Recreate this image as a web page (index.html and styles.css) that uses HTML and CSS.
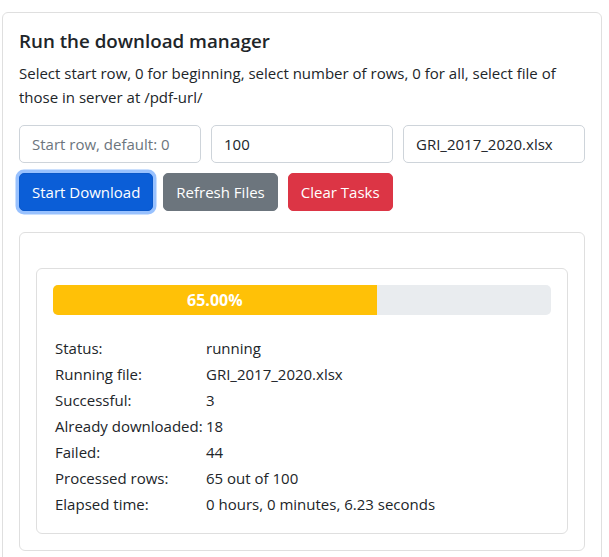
FILE: index.html
```html
<!DOCTYPE html>
<html lang="en">
<head>
<meta charset="utf-8">
<title>Download manager</title>
<link rel="stylesheet" href="styles.css">
</head>
<body>
<div class="card">
  <div class="card-body">
    <h5 class="card-title">Run the download manager</h5>
    <p class="card-text">Select start row, 0 for beginning, select number of rows, 0 for all, select file of those in server at /pdf-url/</p>
    <div class="inputs">
      <input class="form-control" type="text" placeholder="Start row, default: 0">
      <input class="form-control" type="text" value="100">
      <input class="form-control" type="text" value="GRI_2017_2020.xlsx">
    </div>
    <div class="buttons">
      <button class="btn btn-primary focused">Start Download</button>
      <button class="btn btn-secondary">Refresh Files</button>
      <button class="btn btn-danger">Clear Tasks</button>
    </div>
    <div class="card tasks">
      <div class="card-body tasks-body">
        <div class="card task">
          <div class="card-body">
            <div class="progress">
              <div class="progress-bar" style="width: 65%">65.00%</div>
            </div>
            <table class="stats">
              <tr><td>Status:</td><td>running</td></tr>
              <tr><td>Running file:</td><td>GRI_2017_2020.xlsx</td></tr>
              <tr><td>Successful:</td><td>3</td></tr>
              <tr><td>Already downloaded:</td><td>18</td></tr>
              <tr><td>Failed:</td><td>44</td></tr>
              <tr><td>Processed rows:</td><td>65 out of 100</td></tr>
              <tr><td>Elapsed time:</td><td>0 hours, 0 minutes, 6.23 seconds</td></tr>
            </table>
          </div>
        </div>
      </div>
    </div>
  </div>
</div>
</body>
</html>
```
FILE: styles.css
```css
* { box-sizing: border-box; }
html, body { background: #fff; }
body {
  margin: 12px 7px 0 2px;
  font-family: "Open Sans", "Noto Sans", sans-serif;
  font-size: 15px;
  line-height: 24px;
  color: #212529;
}
.card {
  border: 1px solid #dfdfdf;
  border-radius: 6px;
  background: #fff;
}
.card-body { padding: 16px; }
.card-title {
  margin: 0 0 8px;
  font-size: 18.75px;
  font-weight: 600;
  line-height: 24px;
}
.card-text { margin: 0 0 16px; }
.inputs {
  display: grid;
  grid-template-columns: 1fr 1fr 1fr;
  gap: 10px;
}
.form-control {
  height: 38px;
  padding: 6px 12px;
  font: inherit;
  color: #212529;
  border: 1px solid #ced4da;
  border-radius: 5px;
  min-width: 0;
  outline: none;
}
.form-control::placeholder { color: #6c757d; }
.buttons {
  display: flex;
  gap: 10px;
  margin-top: 10px;
}
.btn {
  height: 38px;
  padding: 6px 12px;
  font: inherit;
  color: #fff;
  border: 1px solid transparent;
  border-radius: 5px;
}
.btn-primary { background: #0b5ed7; border-color: #0a58ca; }
.btn-primary.focused { box-shadow: 0 0 0 3.5px rgba(49, 132, 253, 0.5); }
.btn-secondary { background: #6c757d; border-color: #6c757d; }
.btn-danger { background: #dc3545; border-color: #dc3545; }
.tasks { margin-top: 21px; }
.tasks-body { padding-top: 35px; }
.progress {
  display: flex;
  height: 30px;
  background: #e9ecef;
  border-radius: 5px;
  overflow: hidden;
}
.progress-bar {
  display: flex;
  align-items: center;
  justify-content: center;
  background: #ffc107;
  color: #fff;
  font-weight: 700;
  font-size: 16px;
}
.stats {
  margin-top: 20px;
  border-collapse: collapse;
}
.stats td {
  padding: 0;
  height: 26px;
  white-space: nowrap;
  vertical-align: middle;
}
.stats td:first-child {
  width: 153px;
  padding-left: 2px;
}
```
